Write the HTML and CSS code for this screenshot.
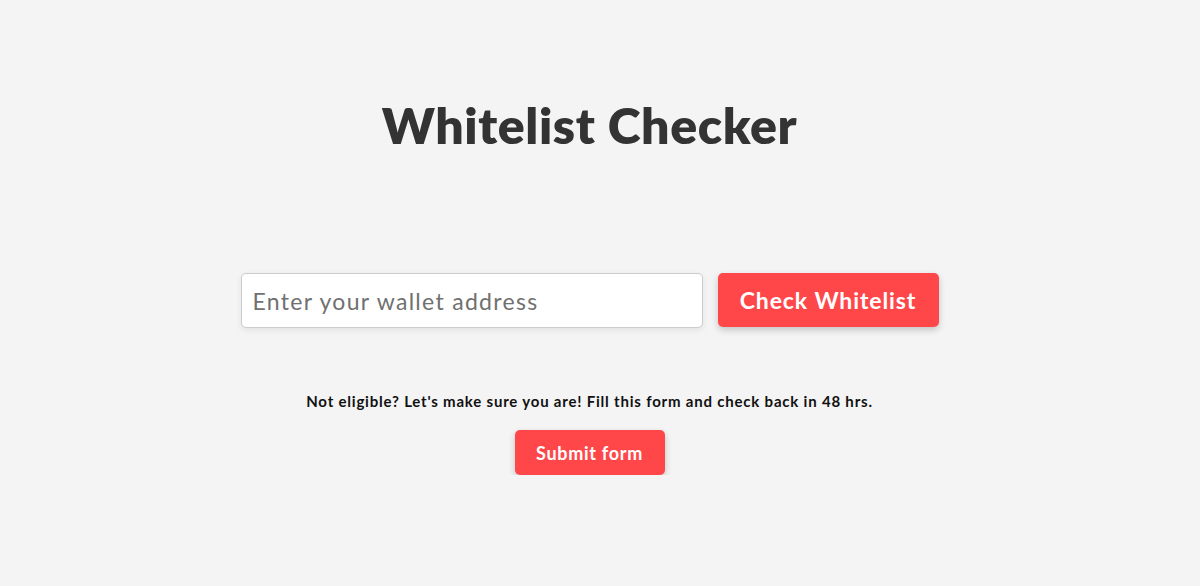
FILE: index.html
```html
<!DOCTYPE html>
<html lang="en">
<head>
    <meta charset="UTF-8">
    <meta name="viewport" content="width=device-width, initial-scale=1.0">
    <title>Whitelist Checker</title>
    <link rel="stylesheet" href="styles.css">
</head>
<body>
    <main class="checker">
        <h1 class="title">Whitelist Checker</h1>
        <form class="check-form" onsubmit="return false;">
            <input type="text" class="wallet-input" placeholder="Enter your wallet address">
            <button type="submit" class="btn btn-check">Check Whitelist</button>
        </form>
        <p class="note">Not eligible? Let's make sure you are! Fill this form and check back in 48 hrs.</p>
        <a href="#" class="btn btn-submit">Submit form</a>
    </main>
</body>
</html>
```

FILE: styles.css
```css
body { background-color: #f4f4f4; color: #333; font-family: Lato, "Open Sans", sans-serif; margin: 0 21px 0 0; }
.checker { display: flex; flex-direction: column; align-items: center; padding-top: 90px; }
.title { font-size: 50px; font-weight: 800; margin: 0; line-height: 70px; color: #333; letter-spacing: 0.6px; }
.check-form { display: flex; gap: 15px; margin-top: 113px; }
.wallet-input { width: 462px; height: 55px; box-sizing: border-box; border: 1px solid #ccc; border-radius: 5px; padding: 0 11px; font-family: inherit; font-size: 23px; letter-spacing: 1.3px; color: #333; background: #fff; box-shadow: 0 2px 6px rgba(0, 0, 0, 0.08); outline: none; }
.wallet-input::placeholder { color: #707070; }
.btn { background-color: #ff474a; color: #fff; border: none; border-radius: 5px; font-family: inherit; font-weight: 700; text-decoration: none; box-shadow: 0 3px 7px rgba(0, 0, 0, 0.2); cursor: pointer; display: flex; align-items: center; justify-content: center; box-sizing: border-box; }
.btn-check { width: 221px; height: 54px; font-size: 23px; letter-spacing: 0.9px; }
.btn-submit { width: 150px; height: 45px; font-size: 18px; letter-spacing: 0.7px; }
.note { font-size: 15px; font-weight: 700; color: #111; margin: 63px 0 19px; line-height: 20px; letter-spacing: 0.8px; }
```
